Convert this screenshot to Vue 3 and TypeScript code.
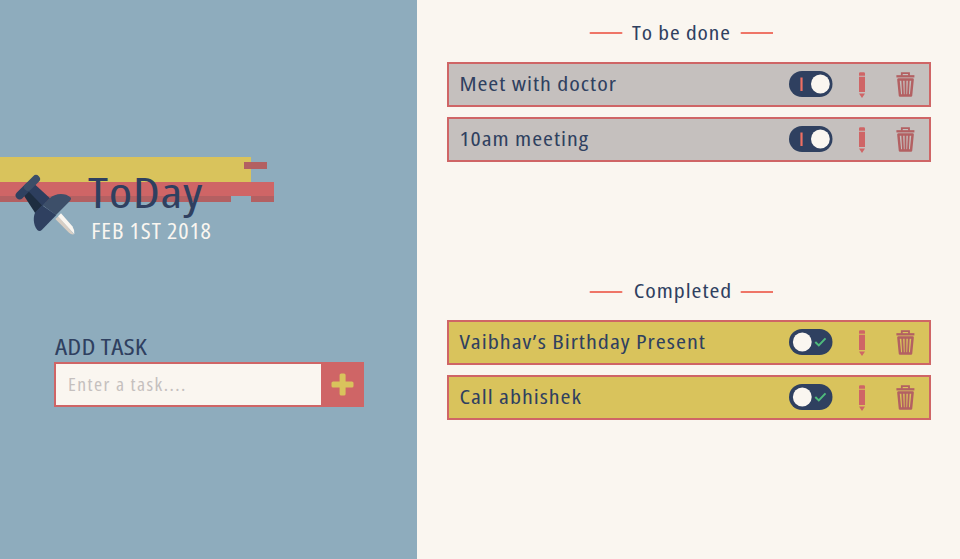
<script setup lang="ts">
import { ref } from 'vue'

interface Task {
  id: number
  title: string
  width: number
  done: boolean
}

interface Section {
  name: string
  x: number
  lineY: number
  width: number
  tasks: Task[]
}

const draft = ref('')

const sections = ref<Section[]>([
  {
    name: 'To be done',
    x: 43,
    lineY: 21,
    width: 99,
    tasks: [
      { id: 1, title: 'Meet with doctor', width: 157.5, done: false },
      { id: 2, title: '10am meeting', width: 129.5, done: false },
    ],
  },
  {
    name: 'Completed',
    x: 44.7,
    lineY: 22,
    width: 98.5,
    tasks: [
      { id: 3, title: 'Vaibhav’s Birthday Present', width: 246.5, done: true },
      { id: 4, title: 'Call abhishek', width: 122.5, done: true },
    ],
  },
])
</script>

<template>
  <main class="app">
    <aside class="side">
      <svg class="banner" width="290" height="90" viewBox="0 157 290 90">
        <rect y="157" width="251" height="25" fill="#d9c35c" />
        <rect y="182" width="274" height="14" fill="#cf6566" />
        <rect y="196" width="231" height="6" fill="#b36062" />
        <rect x="251" y="196" width="23" height="6" fill="#b36062" />
        <rect x="244" y="162" width="23" height="7" fill="#b36062" />
        <g transform="translate(0 145) scale(.33333)">
          <path d="M166 222 207 263Q214 270 222 268L175 214Z" fill="#d8cec4" />
          <path d="M183 205 217 244Q225 256 223 268L174 214Z" fill="#faf6f0" />
          <path d="M72 152 87 134 128 181 106 205Z" fill="#1e2d40" />
          <path d="M100 114 150 160 128 183 84 137Z" fill="#2d3e5e" />
          <path d="M59 151 84 126" stroke="#2f4160" stroke-width="24" stroke-linecap="round" />
          <path d="M84 126 108 102" stroke="#3c4e68" stroke-width="24" stroke-linecap="round" />
          <path d="M148 161C165 143 197 143 211 157Q216 162 209 169L168 210 128 181Z" fill="#3d4f69" />
          <path d="M126 181 169 210 126 254Q119 261 112 255C99 241 99 214 106 202Z" fill="#2f4060" />
        </g>
        <text class="brand" x="88" y="208" textLength="115" lengthAdjust="spacingAndGlyphs">ToDay</text>
        <text class="date" x="91.3" y="238.7" textLength="120.5" lengthAdjust="spacingAndGlyphs">FEB 1ST 2018</text>
      </svg>

      <form class="add" @submit.prevent>
        <svg class="add-label" width="110" height="32">
          <text x="1" y="25.4" textLength="92" lengthAdjust="spacingAndGlyphs">ADD TASK</text>
        </svg>
        <div class="field">
          <input v-model="draft" class="input" type="text" placeholder="Enter a task...." />
          <button class="plus" type="submit" aria-label="Add">
            <svg width="23" height="23" viewBox="0 0 23 23" fill="#d9c35c">
              <rect x="8.6" y="0.5" width="6" height="22" rx="1.6" />
              <rect x="0.5" y="8.5" width="22" height="6" rx="1.6" />
            </svg>
          </button>
        </div>
      </form>
    </aside>

    <section class="board">
      <div v-for="section in sections" :key="section.name" class="section">
        <svg class="heading" width="184" height="40">
          <path :d="`M1.5 ${section.lineY}H32.5M152.5 ${section.lineY}H183.5`" stroke="#ef7567" stroke-width="2" stroke-linecap="round" />
          <text :x="section.x" y="28.2" :textLength="section.width" lengthAdjust="spacingAndGlyphs">{{ section.name }}</text>
        </svg>
        <div class="list">
          <article v-for="task in section.tasks" :key="task.id" class="task" :class="{ done: task.done }">
            <svg class="title" width="320" height="41">
              <text x="0.4" y="27" :textLength="task.width" lengthAdjust="spacingAndGlyphs">{{ task.title }}</text>
            </svg>
            <svg class="toggle" width="44" height="27" viewBox="0 0 44 27">
              <rect width="43.5" height="26" rx="13" fill="#2f4060" />
              <template v-if="task.done">
                <circle cx="13.3" cy="13" r="9.4" fill="#faf6f0" />
                <path d="M26.3 13 29.8 16.4 36.5 9.4" fill="none" stroke="#4fbb7c" stroke-width="2" />
              </template>
              <template v-else>
                <path d="M12.5 6.5V20" stroke="#ef6f62" stroke-width="2.2" />
                <circle cx="31.4" cy="13" r="9.4" fill="#faf6f0" />
              </template>
            </svg>
            <svg class="pencil" width="8" height="27" viewBox="0 0 8 27" fill="#cf6566">
              <path d="M1 4.8V2.5Q1 1.2 2.3 1.2H5.7Q7 1.2 7 2.5V4.8ZM1 5.8H7V21H1ZM1 22.6H7L4 26.9Z" />
            </svg>
            <svg class="trash" width="19" height="27" viewBox="0 0 19 27" fill="none" stroke="#b36062">
              <path d="M.4 5.3H18.4" stroke-width="2.3" />
              <path d="M5.8 4.7V2.1H13V4.7" stroke-width="1.8" />
              <path d="M2.4 8.5H16.6L15 24.6H4Z" stroke-width="2.5" stroke-linejoin="round" />
              <path d="M6.2 9 7 24M9.5 9V24M12.8 9 12 24" stroke-width="1.8" />
            </svg>
          </article>
        </div>
      </div>
    </section>
  </main>
</template>

<style>
body {
  margin: 0;
}
</style>

<style scoped>
.app {
  display: flex;
  width: 960px;
  height: 559px;
  overflow: hidden;
  background: #faf6f0;
  font-family: 'Open Sans', 'Noto Sans', sans-serif;
  font-stretch: 82%;
  font-weight: 470;
}

svg {
  display: block;
  flex: none;
}

text {
  fill: #2f4060;
  font-size: 19.5px;
  letter-spacing: 0.8px;
}

.side {
  box-sizing: border-box;
  width: 417px;
  flex: none;
  padding-top: 157px;
  background: #8eacbd;
}

.brand {
  font-size: 41.5px;
  letter-spacing: 0.5px;
}

.date {
  fill: #faf6f0;
  font-size: 22.5px;
  letter-spacing: 0.8px;
}

.add {
  margin: 83px 0 0 54px;
}

.add-label text {
  font-size: 22.5px;
  letter-spacing: 0.1px;
}

.field {
  display: flex;
  box-sizing: border-box;
  width: 310px;
  height: 45px;
  border: 2px solid #cf6566;
  background: #faf6f0;
}

.input {
  box-sizing: border-box;
  width: 236px;
  height: 41px;
  margin-right: 29px;
  padding: 0 0 1px 10.7px;
  border: 0;
  outline: 0;
  background: transparent;
  color: #2f4060;
  font: inherit;
  font-size: 17.5px;
  letter-spacing: 1.3px;
  transform: scaleX(1.12);
  transform-origin: left;
}

.input::placeholder {
  color: #c5c0be;
  opacity: 1;
}

.plus {
  display: grid;
  flex: 1;
  place-items: center;
  padding: 0 0 0 1px;
  border: 0;
  background: #cf6566;
}

.board {
  box-sizing: border-box;
  display: flex;
  flex: 1;
  flex-direction: column;
  gap: 108px;
  padding: 12px 29px 0 30px;
}

.section {
  display: flex;
  flex-direction: column;
  gap: 10px;
}

.heading {
  margin-left: 142px;
}

.list {
  display: flex;
  flex-direction: column;
  gap: 10px;
}

.task {
  display: flex;
  align-items: center;
  box-sizing: border-box;
  height: 45px;
  padding-left: 10px;
  border: 2px solid #cf6566;
  background: #c5c0be;
}

.task.done {
  background: #d9c35c;
}

.toggle {
  margin-left: 10px;
}

.pencil {
  margin-left: 25px;
}

.trash {
  margin-left: 30px;
}
</style>
